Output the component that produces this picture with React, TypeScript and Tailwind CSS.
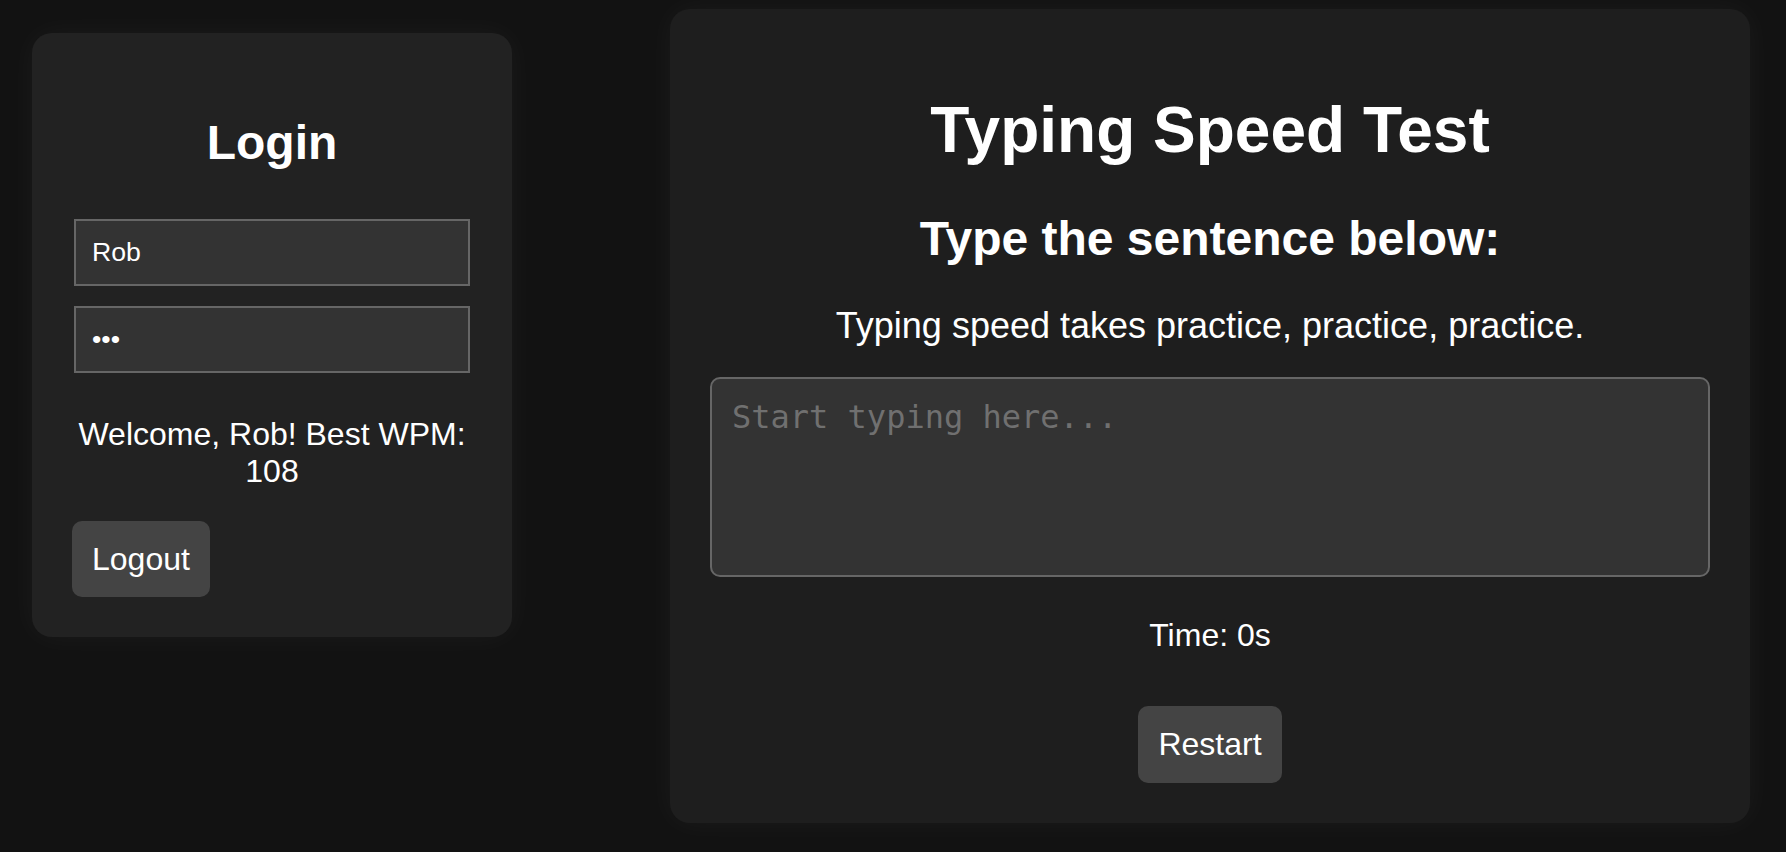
import React from "react";

export default function App() {
  return (
    <div className="min-h-screen w-full bg-[#121212] flex items-start text-white font-['Liberation_Sans',Arial,sans-serif]">
      {/* Login card */}
      <div className="ml-[32px] mt-[33px] w-[480px] p-[40px] rounded-[20px] bg-[#222222] shadow-[0_0_30px_rgba(255,255,255,0.045)] flex flex-col">
        <h2 className="mt-[42px] mb-[39px] text-[48px] leading-[55px] font-bold text-center">Login</h2>
        <div className="flex flex-col items-center gap-[20px] my-[10px]">
          <input
            type="text"
            readOnly
            value="Rob"
            className="w-[396px] h-[67px] px-[16px] border-2 border-[#666666] bg-[#333333] text-[26.67px] text-white outline-none font-['Liberation_Sans',Arial,sans-serif]"
          />
          <input
            type="password"
            readOnly
            value="abc"
            className="w-[396px] h-[67px] px-[16px] border-2 border-[#666666] bg-[#333333] text-[26.67px] text-white outline-none font-['Liberation_Sans',Arial,sans-serif]"
          />
        </div>
        <p className="mt-[33px] text-[32px] leading-[36.8px] text-center">Welcome, Rob! Best WPM: 108</p>
        <div className="mt-[31px]">
          <button className="px-[20px] py-[20px] bg-[#444444] rounded-[10px] text-[32px] leading-[36.8px] text-white">
            Logout
          </button>
        </div>
      </div>

      {/* Typing test card */}
      <div className="ml-[158px] mt-[9px] w-[1080px] p-[40px] rounded-[20px] bg-[#1e1e1e] shadow-[0_0_30px_rgba(255,255,255,0.045)] flex flex-col items-center">
        <h1 className="mt-[45px] text-[64px] leading-[73.6px] font-bold text-center">Typing Speed Test</h1>
        <h2 className="mt-[43px] text-[48px] leading-[55.2px] font-bold text-center">Type the sentence below:</h2>
        <p className="mt-[39px] text-[36px] leading-[41.4px] text-center">
          Typing speed takes practice, practice, practice.
        </p>
        <textarea
          placeholder="Start typing here..."
          className="mt-[31px] block w-[1000px] h-[200px] p-[20px] border-2 border-[#666666] rounded-[10px] bg-[#333333] text-[32px] leading-[37px] text-white placeholder:text-[#707070] outline-none resize-none font-['DejaVu_Sans_Mono',monospace]"
        />
        <p className="mt-[40px] text-[32px] leading-[36.8px] text-center">Time: 0s</p>
        <button className="mt-[52px] px-[20px] py-[20px] bg-[#444444] rounded-[10px] text-[32px] leading-[36.8px] text-white">
          Restart
        </button>
      </div>
    </div>
  );
}
